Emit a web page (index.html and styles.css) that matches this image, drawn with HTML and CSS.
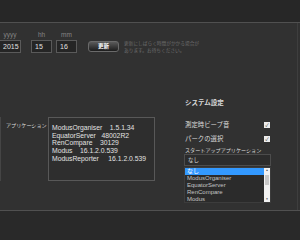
FILE: index.html
```html
<!DOCTYPE html>
<html lang="ja">
<head>
    <meta charset="UTF-8">
    <title>システム設定</title>
    <link rel="stylesheet" href="styles.css">
</head>
<body>
    <div class="topbar"></div>

    <div class="content">
        <div class="time-row">
            <div class="field field-year">
                <span class="field-label">yyyy</span>
                <input class="field-input" type="text" value="2015">
            </div>
            <div class="field field-hour">
                <span class="field-label">hh</span>
                <input class="field-input" type="text" value="15">
            </div>
            <div class="field field-min">
                <span class="field-label">mm</span>
                <input class="field-input" type="text" value="16">
            </div>
            <button class="update-btn">更新</button>
            <p class="note">更新にしばらく時間がかかる場合が<br>あります。お待ちください。</p>
        </div>

        <div class="main">
            <div class="apps">
                <span class="apps-label">アプリケーション</span>
                <div class="apps-box">
                    <div class="app-line">ModusOrganiser    1.5.1.34</div>
                    <div class="app-line">EquatorServer   48002R2</div>
                    <div class="app-line">RenCompare    30129</div>
                    <div class="app-line">Modus    16.1.2.0.539</div>
                    <div class="app-line">ModusReporter     16.1.2.0.539</div>
                </div>
            </div>

            <div class="settings">
                <h3 class="settings-title">システム設定</h3>
                <div class="setting-row">
                    <span>測定時ビープ音</span>
                    <span class="check">✓</span>
                </div>
                <div class="setting-row">
                    <span>パークの選択</span>
                    <span class="check">✓</span>
                </div>
                <div class="startup-label">スタートアップアプリケーション</div>
                <div class="select">なし</div>
                <div class="dropdown">
                    <ul class="options">
                        <li class="selected">なし</li>
                        <li>ModusOrganiser</li>
                        <li>EquatorServer</li>
                        <li>RenCompare</li>
                        <li>Modus</li>
                    </ul>
                    <div class="scrollbar">
                        <span class="arrow">▲</span>
                        <span class="thumb"></span>
                        <span class="arrow arrow-down">▼</span>
                    </div>
                </div>
            </div>
        </div>
    </div>

    <div class="footer"></div>
</body>
</html>
```

FILE: styles.css
```css
:root {
    --bg-color: #313131;
    --band-bg: #272727;
    --line-color: #505050;
    --text-color: #dcdcdc;
    --muted: #858585;
    --accent: #3399ff;
}

body {
    margin: 0;
    width: 300px;
    height: 240px;
    overflow: hidden;
    background-color: var(--bg-color);
    color: var(--text-color);
    font-family: "Liberation Sans", "Noto Sans CJK JP", sans-serif;
}

.topbar {
    height: 22px;
    background: var(--band-bg);
    border-bottom: 1px solid var(--line-color);
}

.content {
    height: 187px;
    width: 297px;
    border-right: 1px solid #3e3e3e;
}

.time-row {
    display: flex;
    align-items: flex-end;
    padding-top: 8px;
}

.field {
    display: flex;
    flex-direction: column;
    align-items: center;
    width: 21px;
}

.field-year {
    width: 22px;
    margin-left: -1px;
}

.field-hour {
    margin-left: 10px;
}

.field-min {
    margin-left: 4px;
}

.field-label {
    font-size: 6.5px;
    line-height: 7px;
    color: var(--muted);
    margin-bottom: 2px;
}

.field-input {
    box-sizing: border-box;
    width: 100%;
    height: 13px;
    margin: 0;
    padding: 0 0 0 3px;
    border: 1px solid #5a5a5a;
    background: #252525;
    color: #e0e0e0;
    font-family: inherit;
    font-size: 7px;
}

.update-btn {
    box-sizing: border-box;
    width: 31px;
    height: 11px;
    margin: 0 0 1px 11px;
    padding: 0;
    border: 1px solid #6a6a6a;
    border-radius: 3px;
    background: linear-gradient(#5a5a5a, #1c1c1c);
    color: white;
    font-family: inherit;
    font-size: 5.5px;
    font-weight: bold;
    line-height: 9px;
}

.note {
    margin: 0 0 -1px 5px;
    font-size: 4.7px;
    line-height: 7px;
    color: #6e6e6e;
    white-space: nowrap;
}

.main {
    display: flex;
    align-items: flex-start;
}

.apps {
    display: flex;
    align-items: flex-start;
    height: 64px;
    margin-top: 64px;
    border-left: 1px solid #454545;
}

.apps-label {
    width: 42px;
    padding-left: 5px;
    margin-top: 5px;
    font-size: 5.1px;
    line-height: 7px;
    white-space: nowrap;
}

.apps-box {
    box-sizing: border-box;
    width: 107px;
    height: 64px;
    padding: 6px 0 0 3px;
    border: 1px solid #585858;
    background: #2e2e2e;
    font-size: 6.8px;
    line-height: 7.7px;
    color: #e2e2e2;
}

.app-line {
    white-space: pre;
}

.settings {
    width: 87px;
    margin: 46px 0 0 30px;
    font-size: 6.4px;
}

.settings-title {
    margin: 0 0 14px 0;
    font-size: 6.5px;
    line-height: 8px;
    font-weight: bold;
}

.setting-row {
    display: flex;
    justify-content: space-between;
    align-items: center;
    height: 7px;
    margin-bottom: 7px;
    padding-right: 2px;
}

.check {
    width: 6px;
    height: 6px;
    background: #ececec;
    color: #333;
    font-size: 5px;
    line-height: 6px;
    text-align: center;
}

.startup-label {
    margin-top: -2px;
    line-height: 6px;
    font-size: 5.1px;
    white-space: nowrap;
}

.select {
    box-sizing: border-box;
    height: 12px;
    margin: 1px 1px 0 -1px;
    padding-left: 3px;
    border: 1px solid #4c4c4c;
    background: #2c2c2c;
    font-size: 5.5px;
    line-height: 10px;
}

.dropdown {
    display: flex;
    height: 36px;
    margin: 1px 1px 0 -1px;
    background: #2b2b2b;
    border: 1px solid #3c3c3c;
    box-sizing: border-box;
}

.options {
    flex: 1;
    margin: 0;
    padding: 0;
    list-style: none;
    font-size: 6px;
    line-height: 7px;
    color: #c4c4c4;
}

.options li {
    padding-left: 2px;
}

.options .selected {
    background: var(--accent);
    color: white;
}

.scrollbar {
    display: flex;
    flex-direction: column;
    align-items: center;
    width: 6px;
    background: #f2f2f2;
    color: #555;
}

.arrow {
    font-size: 3px;
    line-height: 5px;
}

.arrow-down {
    margin-top: auto;
}

.thumb {
    width: 4px;
    height: 10px;
    margin-top: 2px;
    background: #c8c8c8;
}

.footer {
    height: 29px;
    background: #292929;
    border-top: 1px solid var(--line-color);
}
```
